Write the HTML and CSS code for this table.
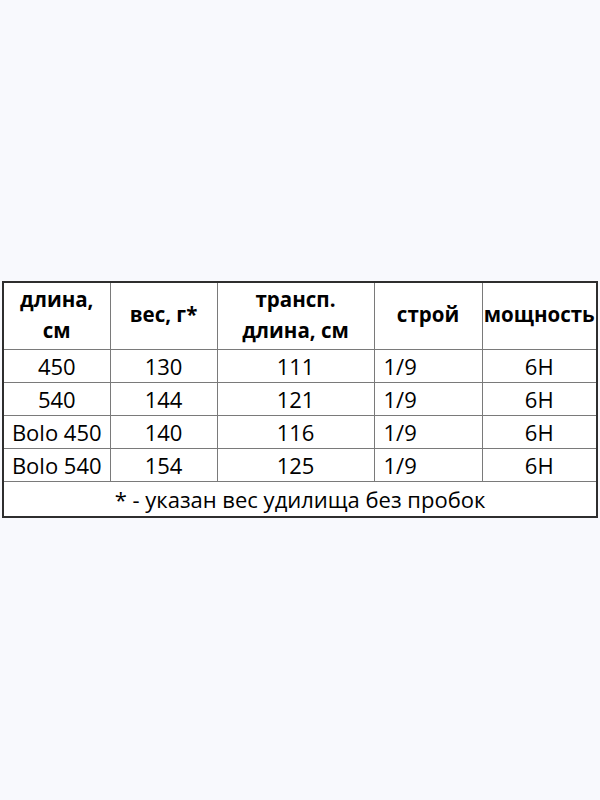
FILE: index.html
```html
<!DOCTYPE html>
<html lang="ru">
<head>
<meta charset="utf-8">
<link rel="stylesheet" href="styles.css">
</head>
<body>
<main class="page">
  <table class="spec">
    <colgroup>
      <col class="c1"><col class="c2"><col class="c3"><col class="c4"><col class="c5">
    </colgroup>
    <thead>
      <tr class="head">
        <th>длина,<br>см</th>
        <th>вес, г*</th>
        <th>трансп.<br>длина, см</th>
        <th>строй</th>
        <th>мощность</th>
      </tr>
    </thead>
    <tbody>
      <tr><td>450</td><td>130</td><td>111</td><td class="left">1/9</td><td>6H</td></tr>
      <tr><td>540</td><td>144</td><td>121</td><td class="left">1/9</td><td>6H</td></tr>
      <tr><td>Bolo 450</td><td>140</td><td>116</td><td class="left">1/9</td><td>6H</td></tr>
      <tr><td>Bolo 540</td><td>154</td><td>125</td><td class="left">1/9</td><td>6H</td></tr>
      <tr class="note"><td colspan="5">* - указан вес удилища без пробок</td></tr>
    </tbody>
  </table>
</main>
</body>
</html>
```
FILE: styles.css
```css
html, body {
  margin: 0;
  padding: 0;
  background: #f8f9fd;
}
.page {
  width: 600px;
  height: 800px;
  display: flex;
  justify-content: center;
  align-items: flex-start;
  padding-top: 281px;
  box-sizing: border-box;
}
.spec {
  border-collapse: collapse;
  table-layout: fixed;
  width: 596px;
  background: #ffffff;
  border: 2px solid #2e2e2e;
  font-family: "Open Sans", "DejaVu Sans", sans-serif;
  font-size: 22px;
  color: #000;
}
.c1 { width: 107px; }
.c2 { width: 107px; }
.c3 { width: 157px; }
.c4 { width: 108px; }
.c5 { width: 115px; }
.spec th, .spec td {
  border: 1px solid #7a7a7a;
  text-align: center;
  padding: 0;
  white-space: nowrap;
}
.spec th {
  font-weight: 700;
  font-size: 20.5px;
  height: 63px;
  padding-bottom: 3px;
  line-height: 31px;
}
.spec td {
  height: 32px;
  line-height: 32px;
}
.spec td.left {
  text-align: left;
  padding-left: 9px;
}
.note td {
  height: 34px;
}
```
